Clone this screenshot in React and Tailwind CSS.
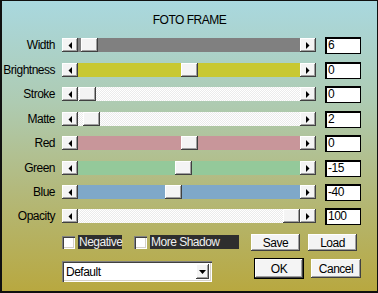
import React from 'react';

const rows = [
  { label: 'Width', value: '6', thumb: 3, track: 'bg-[#808080]', h: 'h-[25px]' },
  { label: 'Brightness', value: '0', thumb: 103, track: 'bg-[#c8c832]', h: 'h-[24px]' },
  { label: 'Stroke', value: '0', thumb: 1, track: 'dots', h: 'h-[25px]' },
  { label: 'Matte', value: '2', thumb: 5, track: 'dots', h: 'h-[24px]' },
  { label: 'Red', value: '0', thumb: 103, track: 'bg-[#c8969a]', h: 'h-[25px]' },
  { label: 'Green', value: '-15', thumb: 97, track: 'bg-[#94c99a]', h: 'h-[24px]' },
  { label: 'Blue', value: '-40', thumb: 87, track: 'bg-[#7fa8c9]', h: 'h-[24px]' },
  { label: 'Opacity', value: '100', thumb: 205, track: 'dots', h: 'h-[24px]' },
];

const raised =
  'bg-[#f4f4f4] shadow-[inset_-1px_-1px_0_#404040,inset_1px_1px_0_#ffffff,inset_-2px_-2px_0_#a0a0a0]';

const sunken =
  'shadow-[inset_1px_1px_0_#808080,inset_2px_2px_0_#404040,inset_-1px_-1px_0_#ffffff,inset_-2px_-2px_0_#d4d0c8]';

const Arrow = ({ dir }) => (
  <div className={`w-[16px] h-[14px] flex items-center justify-center ${raised}`}>
    <svg width="4" height="7" viewBox="0 0 4 7">
      {dir === 'left' ? <path d="M4 0 L0.5 3.5 L4 7 Z" fill="#000" /> : <path d="M0 0 L3.5 3.5 L0 7 Z" fill="#000" />}
    </svg>
  </div>
);

const Scroll = ({ track, thumb }) => {
  const bg =
    track === 'dots'
      ? 'bg-[repeating-conic-gradient(#ffffff_0_25%,#ebebeb_0_50%)] bg-[length:2px_2px]'
      : track;
  return (
    <div className="flex w-[254px] h-[14px] mt-[1px]">
      <Arrow dir="left" />
      <div className={`relative w-[222px] h-[14px] ${bg}`}>
        <div className={`absolute top-0 w-[17px] h-[14px] ${raised}`} style={{ left: thumb }} />
      </div>
      <Arrow dir="right" />
    </div>
  );
};

const Button = ({ children, isDefault, cls }) => (
  <div
    className={`flex items-center justify-center text-[12px] text-black ${cls} ${
      isDefault ? 'border border-black' : ''
    }`}
  >
    <div className={`w-full h-full flex items-center justify-center ${raised}`}>{children}</div>
  </div>
);

const Check = ({ label, wide }) => (
  <div className="flex items-start">
    <div className={`w-[13px] h-[13px] mt-[1px] bg-white ${sunken}`} />
    <div className={`ml-[3px] h-[14px] leading-[14px] bg-[#2e2e2e] text-[#f0f0f0] pl-[1px] ${wide}`}>{label}</div>
  </div>
);

export default function App() {
  return (
    <div
      className="w-[378px] h-[293px] box-border border border-[#101010] border-l-2 border-b-2 bg-[linear-gradient(180deg,#a9d8df_0%,#aecbb2_35%,#b3b97c_65%,#b8a840_100%)] text-black tracking-[-0.5px]"
      style={{ fontFamily: '"Liberation Sans", Arial, sans-serif' }}
    >
      <div className="h-[36px] pt-[12px] text-center text-[12px] leading-[14px]">FOTO FRAME</div>
      <div className="flex flex-col">
        {rows.map((r) => (
          <div key={r.label} className={`flex items-start ${r.h}`}>
            <div className="w-[53px] text-right text-[12px] leading-[16px]">{r.label}</div>
            <div className="ml-[7px]">
              <Scroll track={r.track} thumb={r.thumb} />
            </div>
            <div className="ml-[9px] w-[36px] h-[17px] bg-white border border-black border-l-2 border-t-2 pl-[1px] text-[12px] leading-[13px]">
              {r.value}
            </div>
          </div>
        ))}
      </div>
      <div className="flex items-start mt-[2px] text-[12px]">
        <div className="ml-[60px] mt-[1px] flex items-start">
          <Check label="Negative" wide="w-[44px]" />
          <div className="ml-[12px]">
            <Check label="More Shadow" wide="w-[89px]" />
          </div>
        </div>
        <Button cls="ml-[12px] w-[49px] h-[17px]">Save</Button>
        <Button cls="ml-[8px] w-[49px] h-[17px]">Load</Button>
      </div>
      <div className="flex items-start mt-[7px]">
        <div className={`ml-[60px] mt-[3px] w-[150px] h-[21px] bg-white flex items-center justify-between pl-[4px] pr-[3px] text-[12px] ${sunken}`}>
          <span>Default</span>
          <div className={`w-[13px] h-[15px] flex items-center justify-center ${raised}`}>
            <svg width="7" height="4" viewBox="0 0 7 4">
              <path d="M0 0 L7 0 L3.5 4 Z" fill="#000" />
            </svg>
          </div>
        </div>
        <Button isDefault cls="ml-[42px] w-[50px] h-[21px]">OK</Button>
        <Button cls="ml-[7px] mt-[1px] w-[50px] h-[19px]">Cancel</Button>
      </div>
    </div>
  );
}
